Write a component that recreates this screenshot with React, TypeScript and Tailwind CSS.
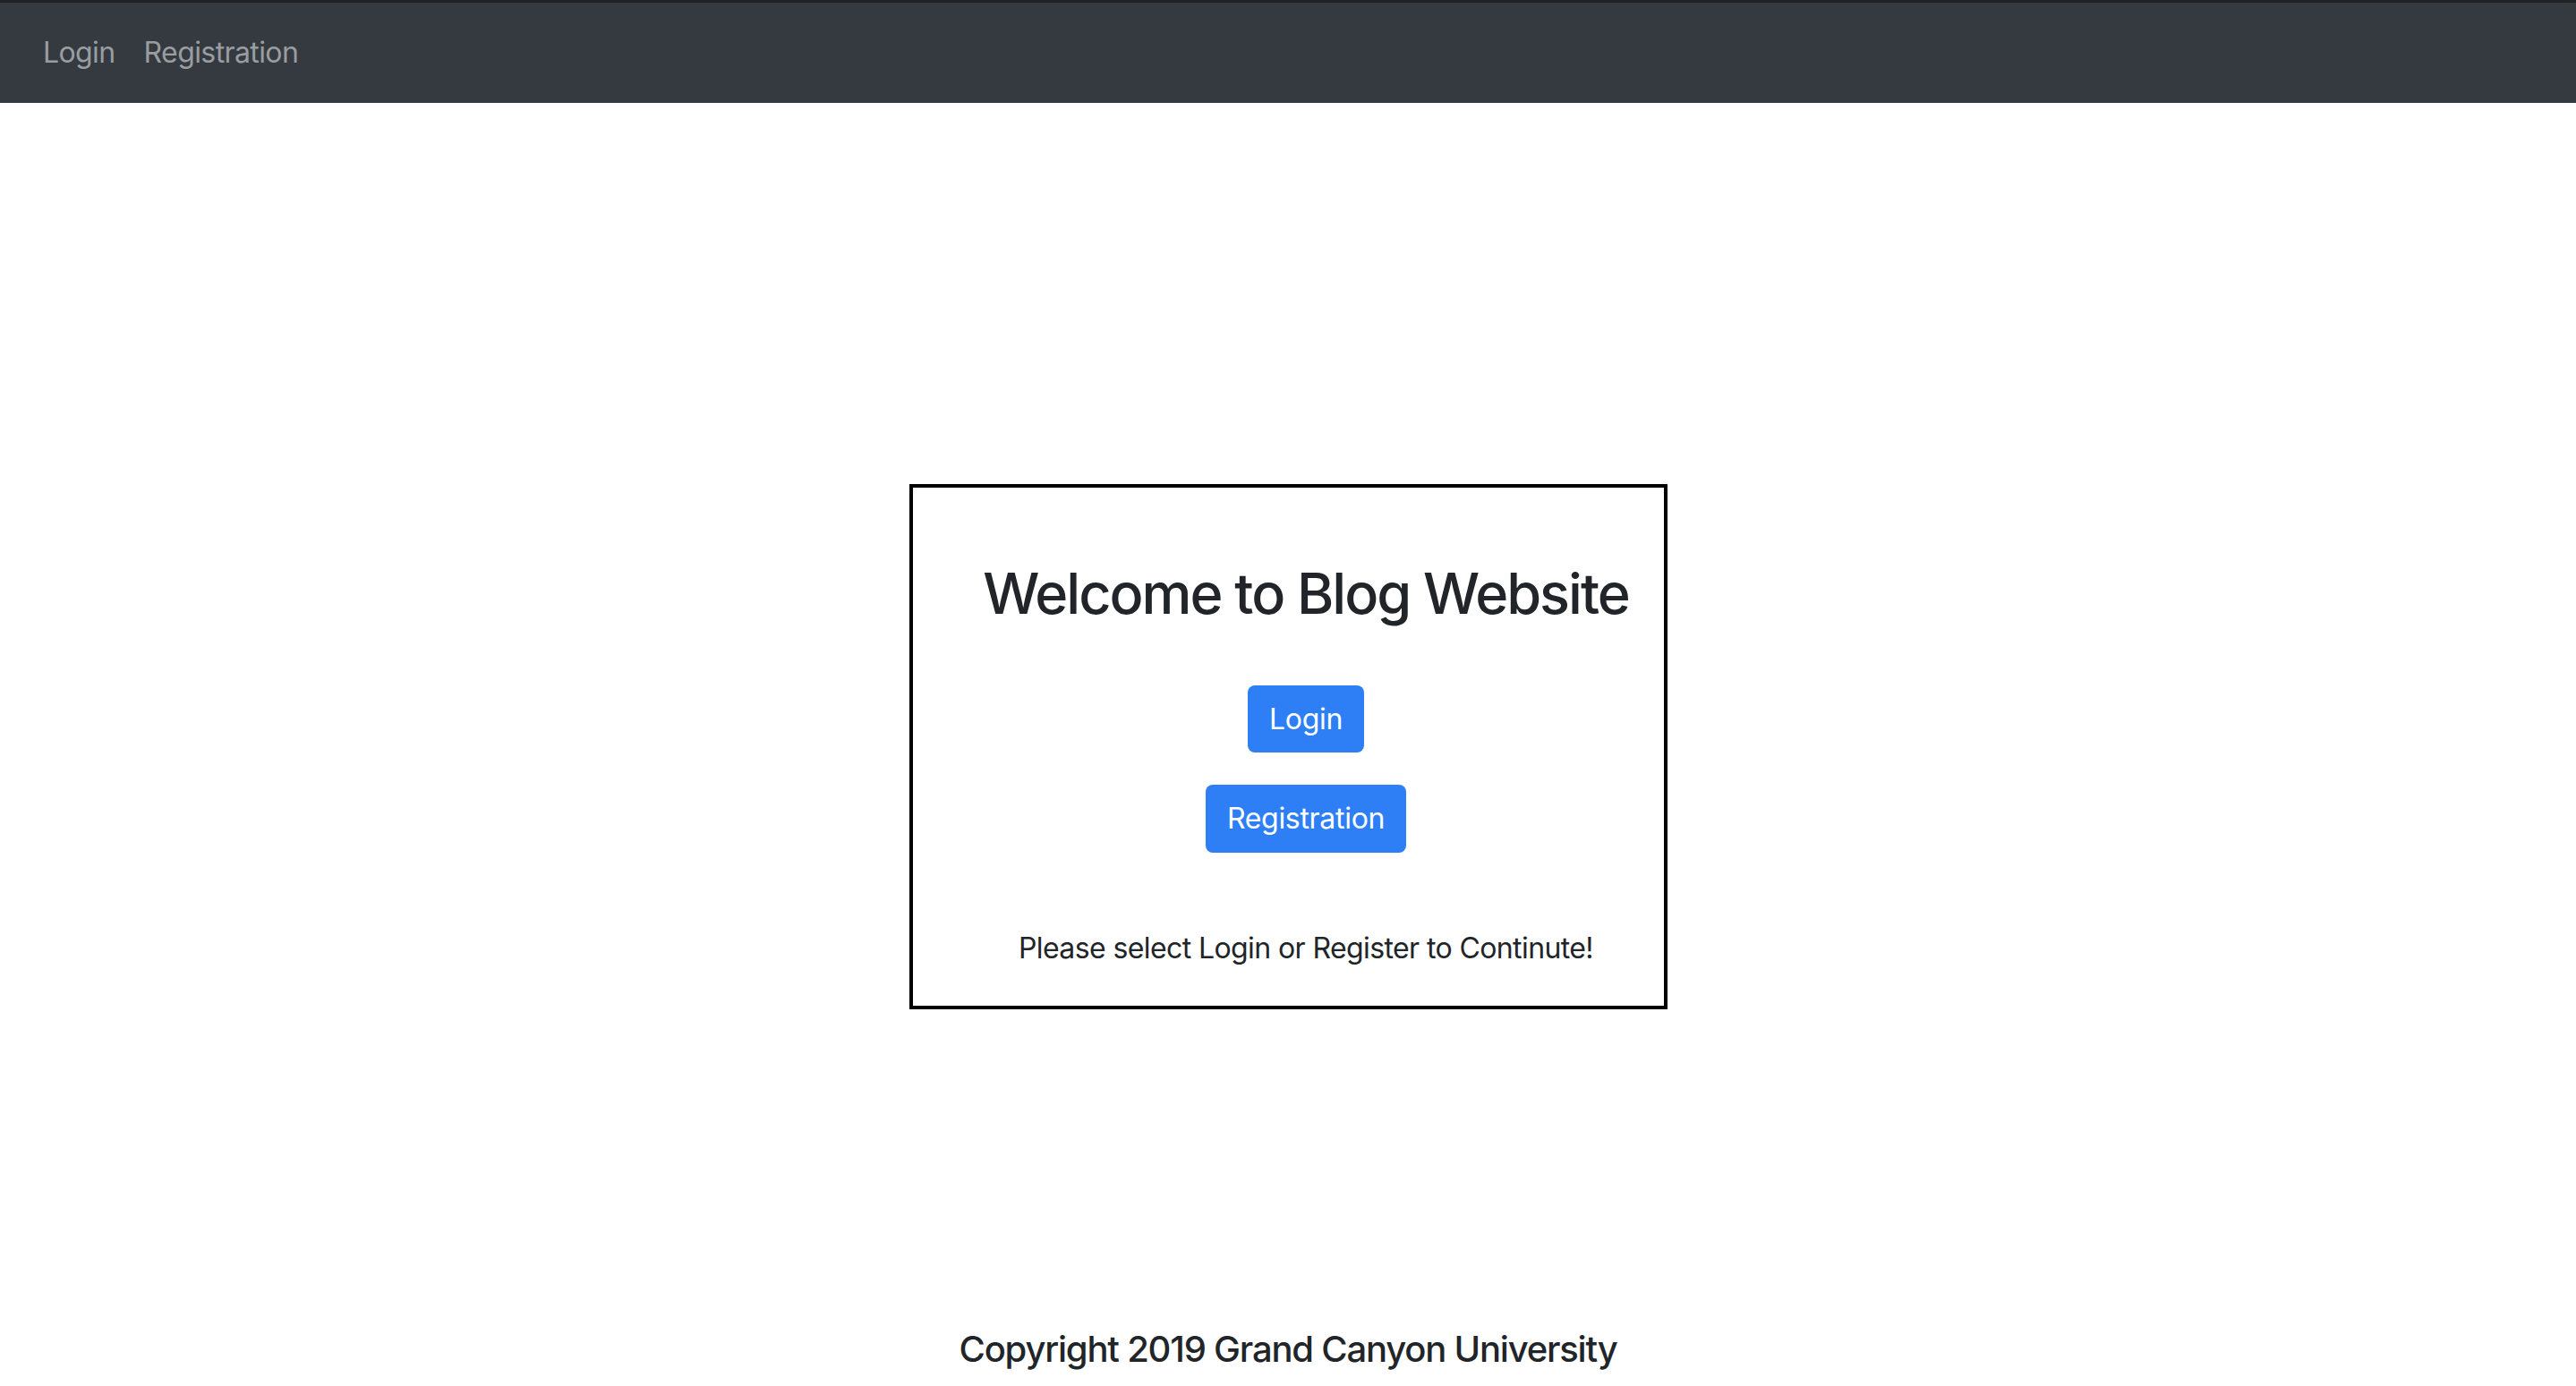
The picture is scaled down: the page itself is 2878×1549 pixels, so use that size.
export default function App() {
  return (
    <div className="flex min-h-screen flex-col bg-white font-['Inter','Liberation_Sans',sans-serif] text-[#212529]">
      <nav className="flex h-[115px] items-center border-t-[3px] border-[#1f2124] bg-[#343a40] px-[32px]">
        <a href="#" className="px-[16px] text-[32px] leading-[48px] tracking-[-0.6px] text-[#9a9da0]">
          Login
        </a>
        <a href="#" className="px-[16px] text-[32px] leading-[48px] tracking-[-0.6px] text-[#9a9da0]">
          Registration
        </a>
      </nav>

      <main className="flex flex-1 flex-col items-center pt-[426px]">
        <div className="flex h-[587px] w-[847px] flex-col items-center border-4 border-black pl-[40px]">
          <h2 className="mt-[80px] text-[63px] font-medium leading-[77px] tracking-[-2px]">
            Welcome to Blog Website
          </h2>
          <button className="mt-[64px] h-[75px] rounded-[8px] bg-[#2e7ff6] px-[24px] text-[32px] leading-[48px] tracking-[-0.3px] text-white">
            Login
          </button>
          <button className="mt-[36px] h-[76px] rounded-[8px] bg-[#2e7ff6] px-[24px] text-[32px] leading-[48px] tracking-[-0.3px] text-white">
            Registration
          </button>
          <p className="mt-[83px] text-[32px] leading-[48px] tracking-[-0.6px]">
            Please select Login or Register to Continute!
          </p>
        </div>

        <footer className="mt-[356px] pb-[16px] text-center">
          <h5 className="text-[40px] font-medium leading-[48px] tracking-[-1.2px]">
            Copyright 2019 Grand Canyon University
          </h5>
        </footer>
      </main>
    </div>
  );
}
